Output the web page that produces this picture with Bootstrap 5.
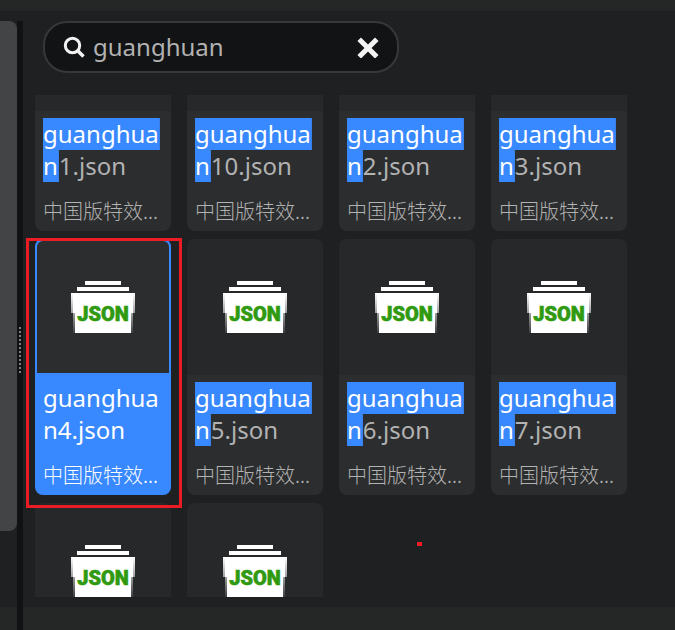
<!DOCTYPE html>
<html lang="zh-CN">
<head>
<meta charset="utf-8">
<meta name="viewport" content="width=device-width, initial-scale=1">
<title>guanghuan</title>
<link href="https://cdn.jsdelivr.net/npm/bootstrap@5.3.0/dist/css/bootstrap.min.css" rel="stylesheet">
<style>
  body { background: #1f2022; color: #b2b2b2; font-family: "Noto Sans", "Noto Sans CJK SC", sans-serif; }
  .strip-top { height: 11px; background: #252726; }
  .strip-foot { height: 23px; background: #252726; }
  .rail { width: 17px; }
  .rail-thumb { background: #434446; border-radius: 0 8px 8px 0; margin-top: 10px; margin-bottom: 76px; }
  .splitter { width: 6px; margin-top: 10px; background: #111214; }
  .grip { width: 2px; height: 46px; margin-top: 48px; background: repeating-linear-gradient(#808182 0 2px, transparent 2px 4px); }
  .panel { padding: 10px 12px; }
  .search { width: 356px; height: 52px; margin-left: 8px; padding: 0 18px; background: #121315; border: 2px solid #37383a; border-radius: 24px; }
  .search input, .search input:focus { background: transparent; color: #b2b2b2; font-size: 24px; line-height: 32px; box-shadow: none; }
  .viewport { margin: 22px -12px 0; padding: 0 12px; }
  .tiles { display: grid; grid-template-columns: repeat(auto-fill, 136px); gap: 8px 16px; margin-top: -120px; }
  .tile { background: #2b2d2e; color: #b2b2b2; border-radius: 8px; }
  .preview { height: 136px; background: #27282a; }
  .caption-box { padding: 7px 8px 9px; height: 120px; }
  .file-name { font-size: 24px; line-height: 32px; height: 64px; word-break: break-all; }
  .hit { color: #fff; background: linear-gradient(#3888ff, #3888ff) center / 100% 32px no-repeat; padding-right: 1px; -webkit-box-decoration-break: clone; box-decoration-break: clone; }
  .kind { font-size: 20px; line-height: 28px; font-weight: 300; margin-top: 15px; font-family: "Noto Sans CJK SC", sans-serif; }
  .chosen { background: #3888ff; color: #fff; }
  .chosen .preview { background: #2b2d2e; border: 2px solid #3888ff; border-radius: 8px 8px 0 0; }
  .outline-note { position: absolute; inset: -1px -11px -13px -9px; border: 3px solid #ed1c24; z-index: 2; pointer-events: none; }
  .dot-note { position: absolute; left: 394px; top: 531px; width: 5px; height: 4px; background: #ed1c24; }
</style>
<script src="https://cdn.jsdelivr.net/npm/bootstrap@5.3.0/dist/js/bootstrap.bundle.min.js"></script>
</head>
<body class="vh-100 d-flex flex-column overflow-hidden">
<svg class="position-absolute" width="0" height="0" aria-hidden="true">
  <defs>
    <linearGradient id="edge" x1="0" y1="0" x2="0" y2="1"><stop offset="0" stop-color="#fff"/><stop offset="1" stop-color="#fff" stop-opacity=".1"/></linearGradient>
  </defs>
  <symbol id="json" viewBox="0 0 64 52">
    <path fill="#fff" d="M14 0h36v4H14zM6 6h52v4H6zM2 12h60v20h-2v20H4V32H2z"/>
    <path fill="url(#edge)" d="M0 12h2v20H0zM62 12h2v20h-2zM2 32h2v20H2zM60 32h2v20h-2z"/>
    <text x="32" y="40" text-anchor="middle" font-family="Roboto, sans-serif" font-weight="900" font-size="20" fill="#2f9a10" stroke="#2f9a10" stroke-width=".6">JSON</text>
  </symbol>
</svg>
<div class="strip-top flex-shrink-0"></div>
<main class="d-flex flex-grow-1 overflow-hidden">
  <div class="rail d-flex flex-column flex-shrink-0">
    <div class="rail-thumb flex-grow-1"></div>
    <div class="strip-foot flex-shrink-0"></div>
  </div>
  <div class="splitter d-flex align-items-center flex-shrink-0 justify-content-center"><div class="grip"></div></div>
  <div class="d-flex flex-column flex-grow-1 overflow-hidden position-relative">
    <section class="panel d-flex flex-column flex-grow-1 overflow-hidden">
      <form class="search d-flex align-items-center mw-100 flex-shrink-0" role="search">
        <label for="query" class="d-flex"><svg width="22" height="22" viewBox="0 0 22 22" fill="none" stroke="#f2f2f2" stroke-width="3" role="img" aria-label="搜索"><circle cx="9.5" cy="9.5" r="7.2"/><path d="M14.5 14.5l6 6" stroke-width="3.6"/></svg></label>
        <input id="query" class="form-control border-0 rounded-0 p-0 ms-2" type="text" value="guanghuan">
        <button type="button" class="btn border-0 p-0 d-flex" aria-label="清除"><svg width="22" height="22" viewBox="0 0 22 22" stroke="#f2f2f2" stroke-width="5"><path d="M2.2 3.2l17.6 17.6M19.8 3.2L2.2 20.8"/></svg></button>
      </form>
      <div class="viewport flex-grow-1 overflow-hidden">
        <div class="tiles" id="tiles"></div>
      </div>
    </section>
    <div class="strip-foot flex-shrink-0"></div>
    <div class="dot-note"></div>
  </div>
</main>
<script>
  const names = [1, 10, 2, 3, 4, 5, 6, 7, null, null];
  const selected = 4;
  const caption = (n, on) => n === null ? '' : `
        <span class="caption-box d-block">
          <span class="file-name d-block">${on ? 'guanghuan' : '<span class="hit">guanghuan</span>'}${n}.json</span>
          <span class="kind d-block text-truncate">中国版特效...</span>
        </span>`;
  document.getElementById('tiles').innerHTML = names.map(n => {
    const on = n === selected;
    return `<div class="position-relative">
      <button type="button" class="tile btn border-0 p-0 w-100 d-block text-start overflow-hidden ${on ? 'chosen' : ''}" aria-pressed="${on}">
        <span class="preview d-flex align-items-center justify-content-center"><svg width="64" height="52" aria-hidden="true"><use href="#json"/></svg></span>${caption(n, on)}
      </button>${on ? '<div class="outline-note"></div>' : ''}
    </div>`;
  }).join('');
</script>
</body>
</html>
